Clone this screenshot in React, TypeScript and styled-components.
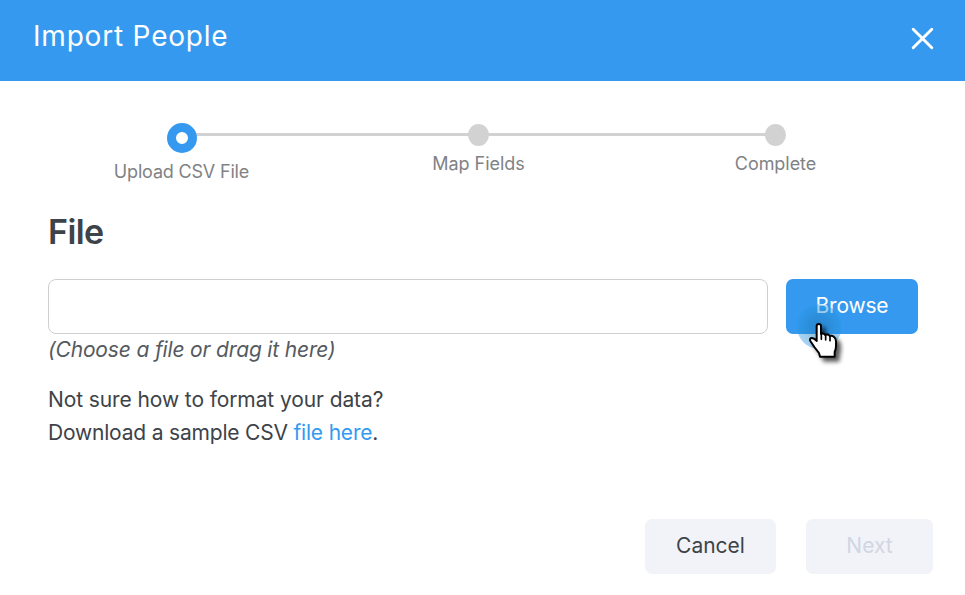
import React from "react";
import styled, { createGlobalStyle } from "styled-components";

const GlobalStyle = createGlobalStyle`
  *, *::before, *::after { box-sizing: border-box; }
  html, body { margin: 0; background: #fff; }
  body { font-family: Inter, "Open Sans", sans-serif; color: #3d4348; }
`;

const Dialog = styled.div`
  width: 965px;
  height: 595px;
  display: flex;
  flex-direction: column;
  background: #fff;
  overflow: hidden;
`;

const Header = styled.header`
  height: 81px;
  flex: none;
  display: flex;
  justify-content: space-between;
  padding: 19px 31px 0 33px;
  background: #359aef;
`;

const Title = styled.h1`
  margin: 0;
  font-size: 28px;
  line-height: 34px;
  font-weight: 400;
  letter-spacing: 0.8px;
  color: #fff;
`;

const CloseButton = styled.button`
  width: 23px;
  height: 23px;
  margin-top: 8px;
  padding: 0;
  border: 0;
  background: none;
  svg { display: block; }
`;

const Steps = styled.ol`
  display: grid;
  grid-template-columns: repeat(3, 297px);
  width: 891px;
  height: 100px;
  margin: 42px 0 0 33px;
  padding: 0;
  list-style: none;
`;

const Step = styled.li<{ $active?: boolean }>`
  position: relative;
  display: flex;
  flex-direction: column;
  align-items: center;
  padding-top: ${(p) => (p.$active ? 0 : 1)}px;

  &:not(:last-child)::after {
    content: "";
    position: absolute;
    top: 10px;
    left: 50%;
    width: 100%;
    height: 3px;
    background: #d2d2d2;
  }
`;

const Dot = styled.span<{ $active?: boolean }>`
  position: relative;
  z-index: 1;
  width: ${(p) => (p.$active ? 30 : 21)}px;
  height: ${(p) => (p.$active ? 30 : 22)}px;
  margin-left: ${(p) => (p.$active ? 1 : 0)}px;
  border-radius: 50%;
  border: ${(p) => (p.$active ? "9px solid #359aef" : "0")};
  background: ${(p) => (p.$active ? "#fff" : "#d2d2d2")};
`;

const StepLabel = styled.span<{ $active?: boolean }>`
  margin-top: ${(p) => (p.$active ? 8 : 7)}px;
  font-size: 18px;
  line-height: 22px;
  letter-spacing: ${(p) => (p.$active ? -0.18 : -0.05)}px;
  color: #808285;
`;

const Body = styled.main`
  padding: 0 47px 0 48px;
`;

const SectionTitle = styled.h2`
  margin: -12px 0 27px;
  font-size: 34px;
  line-height: 41px;
  font-weight: 600;
  letter-spacing: -0.6px;
`;

const FileRow = styled.div`
  display: flex;
  gap: 18px;
`;

const FileInput = styled.input`
  width: 720px;
  height: 55px;
  border: 1px solid #cfcfd1;
  border-radius: 8px;
  background: #fff;
  outline: 0;
`;

const Button = styled.button<{ $kind: "primary" | "plain" | "disabled"; $width: number }>`
  width: ${(p) => p.$width}px;
  height: 55px;
  padding: 0 0 2px;
  border: 0;
  border-radius: 7px;
  font: 400 21px/26px Inter, sans-serif;
  letter-spacing: ${(p) => (p.$kind === "primary" ? -0.2 : 0)}px;
  background: ${(p) => (p.$kind === "primary" ? "#359aef" : "#f2f3f8")};
  color: ${(p) => ({ primary: "#fff", plain: "#3d4348", disabled: "#d0d6e2" })[p.$kind]};
`;

const BrowseArea = styled.div`
  position: relative;
`;

const Pointer = styled.svg`
  position: absolute;
  left: 4px;
  top: 31px;
  overflow: visible;
  pointer-events: none;
`;

const Hint = styled.p`
  margin: 3px 0 0;
  font-size: 21px;
  line-height: 26px;
  letter-spacing: -0.16px;
  font-style: italic;
  color: #555a5f;
`;

const Help = styled.p`
  margin: 20px 0 0;
  font-size: 21px;
  line-height: 33px;
`;

const HelpLine = styled.span<{ $tracking: number }>`
  display: block;
  letter-spacing: ${(p) => p.$tracking}px;
`;

const Link = styled.a`
  color: #359aef;
`;

const Footer = styled.footer`
  display: flex;
  justify-content: flex-end;
  gap: 30px;
  margin-top: auto;
  padding: 0 32px 21px 0;
`;

const steps = ["Upload CSV File", "Map Fields", "Complete"];

const HandPointer = () => (
  <Pointer width="64" height="64" viewBox="0 0 192 192" aria-hidden="true">
    <defs>
      <radialGradient id="halo">
        <stop offset="0" stopColor="#1c72b4" stopOpacity="0.5" />
        <stop offset="0.55" stopColor="#2383c6" stopOpacity="0.46" />
        <stop offset="1" stopColor="#2496e4" stopOpacity="0.4" />
      </radialGradient>
      <filter id="shade" x="-40%" y="-40%" width="200%" height="200%">
        <feDropShadow dx="12" dy="12" stdDeviation="6" floodColor="#000" floodOpacity="0.65" />
      </filter>
    </defs>
    <circle cx="88" cy="50" r="67" fill="url(#halo)" />
    <g filter="url(#shade)" strokeLinejoin="round" strokeLinecap="round">
      <path
        d="M80 93V48Q80 42 86.500 42T93 48V72Q99 67 106 75Q113 70 120 78Q127 75 132 81Q138 85 138 94V108Q138 117 134 126V140H90L87 129L73 111L61 93Q58 86 64 84Q72 83 80 93Z"
        fill="#fff"
        stroke="#000"
        strokeWidth="6"
      />
      <path d="M94 71V88M107 75V90M120 79V92" fill="none" stroke="#000" strokeWidth="5" />
    </g>
  </Pointer>
);

export default function App() {
  return (
    <>
      <GlobalStyle />
      <Dialog>
        <Header>
          <Title>Import People</Title>
          <CloseButton aria-label="Close">
            <svg width="23" height="23" viewBox="0 0 23 23">
              <path d="M2.200 2.200L20.800 20.800M20.800 2.200L2.200 20.800" stroke="#fff" strokeWidth="2.900" strokeLinecap="round" />
            </svg>
          </CloseButton>
        </Header>
        <Steps>
          {steps.map((label, i) => (
            <Step key={label} $active={i === 0}>
              <Dot $active={i === 0} />
              <StepLabel $active={i === 0}>{label}</StepLabel>
            </Step>
          ))}
        </Steps>
        <Body>
          <SectionTitle>File</SectionTitle>
          <FileRow>
            <FileInput aria-label="File" />
            <BrowseArea>
              <Button $kind="primary" $width={132}>Browse</Button>
              <HandPointer />
            </BrowseArea>
          </FileRow>
          <Hint>(Choose a file or drag it here)</Hint>
          <Help>
            <HelpLine $tracking={-0.1}>Not sure how to format your data?</HelpLine>
            <HelpLine $tracking={-0.19}>
              Download a sample CSV <Link>file here</Link>.
            </HelpLine>
          </Help>
        </Body>
        <Footer>
          <Button $kind="plain" $width={131}>Cancel</Button>
          <Button $kind="disabled" $width={127}>Next</Button>
        </Footer>
      </Dialog>
    </>
  );
}
